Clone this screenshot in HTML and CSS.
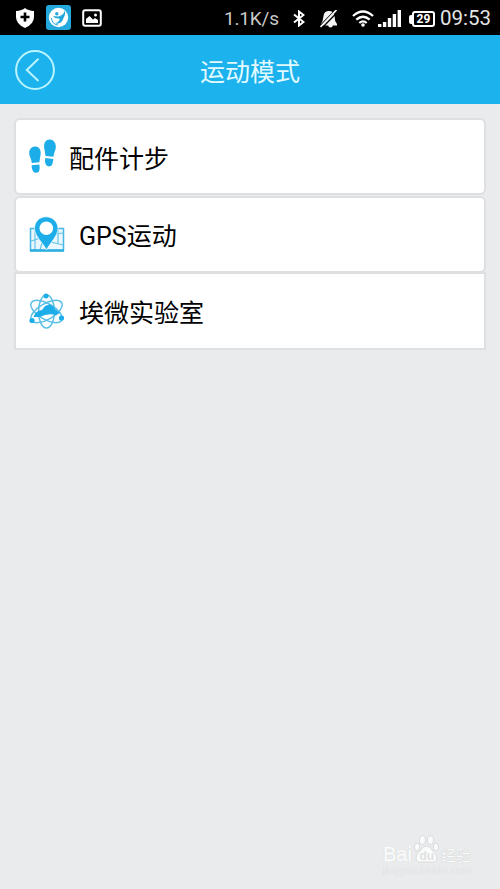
FILE: index.html
```html
<!DOCTYPE html>
<html lang="zh-CN">
<head>
<meta charset="utf-8">
<title>运动模式</title>
<link rel="stylesheet" href="styles.css">
</head>
<body>
<div class="status">
  <div class="status-left">
    <svg width="18" height="20" viewBox="0 0 18 20"><path fill="#fff" d="M9 0Q12 2.500 18 3V9Q18 16 9 20Q0 16 0 9V3Q6 2.500 9 0Z"/><path d="M9 4.500V13.500M4.500 9H13.500" stroke="#000" stroke-width="2.600"/></svg>
    <svg width="25" height="25" viewBox="0 0 25 25"><rect width="25" height="25" rx="3" fill="#25a9dc"/><circle cx="12.500" cy="12.500" r="9.700" fill="#fff"/><circle cx="10.800" cy="8.800" r="1.700" fill="#25a9dc"/><path fill="#25a9dc" d="M18.500 5.500Q18 10 12.500 11.500L7 11Q9 14 13.500 13.500Q14 16.500 9 18.500Q16 19.500 17.500 13Q20 9 18.500 5.500Z"/><path fill="none" stroke="#25a9dc" d="M5.500 13Q6 19.500 12 20"/></svg>
    <svg width="20" height="18" viewBox="0 0 20 18"><rect x="1.200" y="1.200" width="17.600" height="15.600" rx="2" fill="none" stroke="#fff" stroke-width="2"/><path fill="#fff" d="M4 14V10L7.500 7L11 10.500L13 9L16 11V14Z"/><circle cx="13.500" cy="6" r="1.500" fill="#fff"/></svg>
  </div>
  <div class="status-right">
    <span class="rate">1.1K/s</span>
    <svg class="bt" width="12" height="17" viewBox="0 0 12 17"><path fill="none" stroke="#fff" stroke-width="2" d="M1 4.500L10.500 12L6 15.500V1.500L10.500 5L1 12.500"/></svg>
    <svg class="bell" width="18" height="18" viewBox="0 0 18 18"><path fill="#f4f4f4" d="M9 1Q14 1 14.500 6Q14.500 11 17 14V15.500H1V14Q3 11 3.500 6Q4 1 9 1ZM8 15H13Q12.500 17.500 10.500 17.500T8 15Z"/><path stroke="#000" stroke-width="1.500" d="M0 16L15.500 0"/><path stroke="#f4f4f4" stroke-width="1.800" d="M.5 17L16.500 0"/><path stroke="#000" stroke-width="1.300" d="M2.500 17.500L18 1.500"/></svg>
    <svg class="wifi" width="22" height="17" viewBox="0 0 22 17"><g fill="none" stroke="#fff" stroke-width="2.300"><path d="M1 6Q11-3 21 6M4.300 9.700Q11 3.700 17.700 9.700M7.300 13Q11 9.700 14.700 13"/></g><circle cx="11" cy="15" r="1.800" fill="#fff"/></svg>
    <svg class="signal" width="23" height="17" viewBox="0 0 23 17"><path stroke="#fff" stroke-width="3.400" d="M1.700 17V14M6.600 17V12M11.500 17V8M16.400 17V4M21.300 17V0"/></svg>
    <span class="battery"><i></i><b>29</b></span>
    <span class="clock">09:53</span>
  </div>
</div>
<header class="header">
  <svg class="back" width="40" height="40" viewBox="0 0 40 40"><circle cx="20" cy="20" r="18.900" fill="none" stroke="#b9f4ff" stroke-width="2"/><path fill="none" stroke="#b9f4ff" stroke-width="2" d="M23.500 8.700L11.800 20L23.500 31"/></svg>
  <h1>运动模式</h1>
</header>
<main class="list">
  <div class="card">
    <svg width="28" height="36" viewBox="0 0 28 36"><g fill="#1daee9"><path d="M6 8.500C10 8.500 12.300 12 11.600 16.500Q11 20 10.400 24.300L2.800 25Q2.300 21.500 .7 18C-1 13.500 1.500 8.500 6 8.500Z"/><path d="M2.600 27.200L10.400 26.500Q11.700 34.500 7.300 34.800Q3 35 2.600 27.200Z"/><path d="M20.500 1.500C25 1.300 27.700 6 26.600 11Q25 15 24.400 18.800L16.500 18Q16 14 15.300 10.500C14.300 5.500 16.500 1.700 20.500 1.500Z"/><path d="M16.200 20L24.300 20.900Q24 28.700 19.700 28.400Q15.300 28 16.200 20Z"/></g></svg>
    <span>配件计步</span>
  </div>
  <div class="card">
    <svg class="wide" width="36" height="36" viewBox="0 0 36 36"><path fill="#d6f0fa" fill-opacity=".5" stroke="#48b9e6" stroke-width="1.500" d="M1.500 12.500H34.500V34.500H1.500Z"/><path fill="none" stroke="#65c4e9" stroke-width="1.200" d="M2 25L12 22M6 12V34M22 26L34 29M27 18L34 17M29 12V27M11 34L13 27"/><path stroke="#2aaee2" stroke-width="2.500" d="M1 34.500H35"/><path fill="#1daee9" stroke="#fff" stroke-width=".7" d="M17 .8C24 .8 29 6 29 12.500C29 20 21 27 17.500 34C14 27 5.500 20 5.500 12.500C5.500 6 10 .8 17 .8Z"/><circle cx="17.300" cy="12.300" r="6.800" fill="#fff"/></svg>
    <span>GPS运动</span>
  </div>
  <div class="card">
    <svg class="wide" width="36" height="36" viewBox="0 0 36 36"><g fill="none" stroke="#5cbfe6" stroke-width="1.500"><ellipse cx="17.500" cy="18.500" rx="8" ry="16.500"/><ellipse cx="17.500" cy="18.500" rx="8" ry="17.500" transform="rotate(60 17.500 18.500)"/><ellipse cx="17.500" cy="18.500" rx="8" ry="17.500" transform="rotate(-60 17.500 18.500)"/></g><path fill="#1daee9" d="M4.500 24Q6 18 13 17L16 13L20 11.500L24 13L26 16L31 20L27 22Q18 20 11 24Z"/><g fill="#1daee9"><circle cx="17" cy="3" r="2.500"/><circle cx="3" cy="27.500" r="2.600"/><circle cx="32.500" cy="25" r="2.600"/></g></svg>
    <span>埃微实验室</span>
  </div>
</main>
<div class="mark">
  <div class="mark-row">
    <span class="bai">Bai</span>
    <svg width="25" height="29" viewBox="0 0 25 29"><g fill="#fafbfb" stroke="#d3d4d5" stroke-width=".8"><ellipse cx="3" cy="12" rx="2.600" ry="3.800"/><ellipse cx="8.500" cy="5" rx="3" ry="4.200"/><ellipse cx="16.500" cy="5" rx="3" ry="4.200"/><ellipse cx="22" cy="12" rx="2.600" ry="3.800"/><path d="M12.500 11Q16 11 18 15Q23 19 23 23Q22 28 17 27H8Q2 28 2 23Q2 19 7 15Q9 11 12.500 11Z"/></g><text class="du" x="5.500" y="25">du</text></svg>
    <span class="jy">经验</span>
  </div>
  <div class="url">jingyan.baidu.com</div>
</div>
</body>
</html>
```
FILE: styles.css
```css
* { box-sizing: border-box; }
body {
  margin: 0;
  height: 889px;
  overflow: hidden;
  background: #eaebed;
  font-family: Roboto, "Noto Sans CJK SC", sans-serif;
}
svg { display: block; flex: none; }
.status {
  height: 35px;
  background: #000;
  color: #e4e4e4;
  display: flex;
  justify-content: space-between;
  padding: 0 8px 0 16px;
}
.status-left, .status-right { display: flex; align-items: center; }
.status-left { gap: 11px; }
.status-left svg:first-child { margin-right: 1px; }
.rate, .clock { line-height: 35px; padding-top: 2px; white-space: nowrap; }
.rate { width: 54px; font-size: 19px; letter-spacing: -0.2px; color: #c9c9c9; }
.bt { margin: 2px 0 0 15px; }
.bell { margin: 2px 0 0 15px; }
.wifi { margin: 1px 0 0 14px; }
.signal { margin: 2px 0 0 4px; }
.battery { display: flex; align-items: center; margin: 3px 0 0 8px; }
.battery i { width: 3px; height: 9px; background: #fff; border-radius: 2px 0 0 2px; }
.battery b {
  width: 23px;
  height: 16px;
  border: 2px solid #fff;
  border-radius: 3px;
  font-size: 12px;
  line-height: 12px;
  text-align: center;
  color: #fff;
}
.clock { width: 52px; margin-left: 5px; font-size: 20.5px; }
.header {
  height: 69px;
  background: #1bb2ed;
  display: grid;
  grid-template-columns: 40px 1fr 40px;
  align-items: center;
  padding: 0 15px;
}
.header h1 {
  margin: 0;
  padding-top: 7px;
  text-align: center;
  font-size: 25px;
  font-weight: 400;
  line-height: 36px;
  color: #e2faff;
}
.list { padding: 14px 14px 0; }
.card {
  height: 77px;
  display: flex;
  align-items: center;
  padding: 0 0 1px 13px;
  background: #fff;
  border: 2px solid #dedfe1;
  border-radius: 6px;
  font-size: 25px;
  line-height: 36px;
  color: #000;
}
.card + .card { margin-top: 1px; }
.card:last-child { margin-top: -1px; height: 78px; border-radius: 0; }
.card span { margin-left: 12px; padding-top: 7px; }
.card .wide + span { margin-left: 14px; padding-top: 6px; }
.mark {
  position: absolute;
  left: 383px;
  top: 835px;
  width: 92px;
  color: #fafbfb;
  text-shadow: 0 0 1px #b4b5b6;
}
.mark-row { display: flex; align-items: flex-end; height: 29px; }
.bai { width: 31px; font: 20px/20px "Liberation Sans", sans-serif; -webkit-text-stroke: 0.5px #fafbfb; }
.du { font: bold 12px "Liberation Sans", sans-serif; fill: #dfe0e1; text-shadow: none; }
.jy { font-size: 15px; line-height: 16px; margin-left: 2px; }
.url { font-size: 11px; line-height: 14px; color: #f0f1f2; text-shadow: 0 0 1px #c8c9ca; }
```
